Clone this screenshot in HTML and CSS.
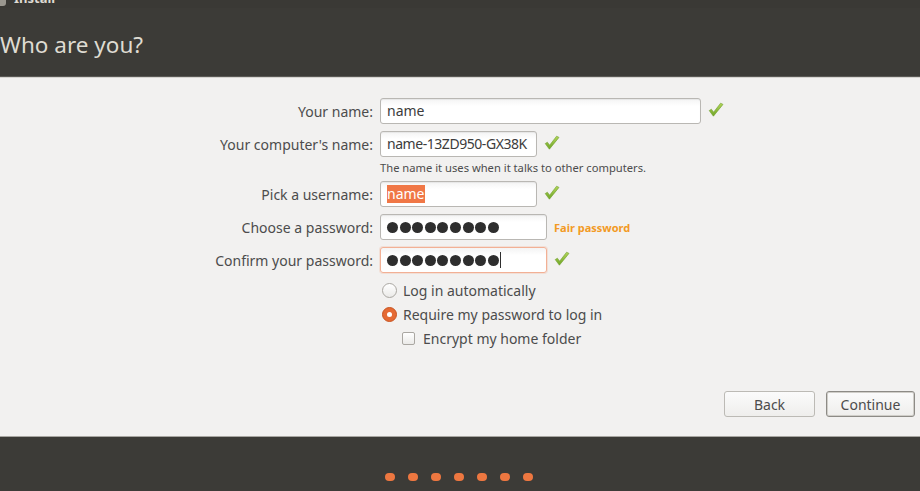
FILE: index.html
```html
<!DOCTYPE html>
<html>
<head>
<meta charset="utf-8">
<link rel="stylesheet" href="styles.css">
</head>
<body>
<svg class="defs" width="0" height="0"><defs><linearGradient id="cg" x1="0" y1="0" x2="0" y2="1"><stop offset="0" stop-color="#b4d65a"/><stop offset="1" stop-color="#6fa526"/></linearGradient></defs></svg>
<div class="window">
  <div class="titlebar"><span class="tb-icon"></span><span class="tb-text">Install</span></div>
  <div class="header"><h1 class="title">Who are you?</h1></div>
  <div class="content">
    <div class="form">
      <div class="row">
        <label class="label">Your name:</label>
        <div class="field"><div class="input wide">name</div>
          <svg class="check" viewBox="0 0 16 16"><path d="M1.2 8.6 L5.4 14.2 L15 2.4 L12.6 1.2 L5.6 10.2 L3.4 7.2 Z" fill="url(#cg)" stroke="#6d9e28" stroke-width="0.6" stroke-linejoin="round"/></svg>
        </div>
      </div>
      <div class="row">
        <label class="label">Your computer's name:</label>
        <div class="field"><div class="input mid tight">name-13ZD950-GX38K</div>
          <svg class="check" viewBox="0 0 16 16"><path d="M1.2 8.6 L5.4 14.2 L15 2.4 L12.6 1.2 L5.6 10.2 L3.4 7.2 Z" fill="url(#cg)" stroke="#6d9e28" stroke-width="0.6" stroke-linejoin="round"/></svg>
        </div>
      </div>
      <div class="hint">The name it uses when it talks to other computers.</div>
      <div class="row">
        <label class="label">Pick a username:</label>
        <div class="field"><div class="input mid"><span class="sel">name</span></div>
          <svg class="check" viewBox="0 0 16 16"><path d="M1.2 8.6 L5.4 14.2 L15 2.4 L12.6 1.2 L5.6 10.2 L3.4 7.2 Z" fill="url(#cg)" stroke="#6d9e28" stroke-width="0.6" stroke-linejoin="round"/></svg>
        </div>
      </div>
      <div class="row">
        <label class="label">Choose a password:</label>
        <div class="field"><div class="input pw"><span class="dots"><i></i><i></i><i></i><i></i><i></i><i></i><i></i><i></i><i></i></span></div>
          <span class="strength">Fair password</span>
        </div>
      </div>
      <div class="row">
        <label class="label">Confirm your password:</label>
        <div class="field"><div class="input pw focus"><span class="dots"><i></i><i></i><i></i><i></i><i></i><i></i><i></i><i></i><i></i></span><span class="caret"></span></div>
          <svg class="check" viewBox="0 0 16 16"><path d="M1.2 8.6 L5.4 14.2 L15 2.4 L12.6 1.2 L5.6 10.2 L3.4 7.2 Z" fill="url(#cg)" stroke="#6d9e28" stroke-width="0.6" stroke-linejoin="round"/></svg>
        </div>
      </div>
      <div class="options">
        <div class="opt"><span class="radio"></span><span>Log in automatically</span></div>
        <div class="opt"><span class="radio on"></span><span>Require my password to log in</span></div>
        <div class="opt sub"><span class="checkbox"></span><span>Encrypt my home folder</span></div>
      </div>
    </div>
    <div class="buttons">
      <button class="btn back">Back</button>
      <button class="btn cont">Continue</button>
    </div>
  </div>
  <div class="footer">
    <div class="dots-bar"><i></i><i></i><i></i><i></i><i></i><i></i><i></i></div>
  </div>
</div>
</body>
</html>
```
FILE: styles.css
```css
* { box-sizing: border-box; }
html, body { margin: 0; padding: 0; }
body {
  width: 920px; height: 491px; overflow: hidden;
  font-family: "Noto Sans", "DejaVu Sans", sans-serif;
  background: #f2f1f0;
}
.defs { position: absolute; width: 0; height: 0; }
.window { display: flex; flex-direction: column; height: 491px; }
.titlebar {
  height: 8px; background: #3a3935; position: relative; overflow: hidden;
  display: flex; align-items: flex-end;
}
.tb-icon {
  width: 6px; height: 6px; border-radius: 0 0 3px 0; background: #9a978f;
  margin-bottom: 2px; flex: none;
}
.tb-text {
  color: #dfdbd2; font-weight: bold; font-size: 13px; line-height: 13px;
  margin-left: 8px; margin-bottom: 3px;
}
.header {
  height: 69px; background: #3c3b37;
  border-bottom: 1px solid #5a5955;
  display: flex; align-items: flex-start;
}
.title {
  margin: 22px 0 0 0; font-weight: normal; font-size: 22.5px; line-height: 30px;
  color: #dfdbd2;
}
.content {
  flex: 1; background: #f2f1f0; display: flex; flex-direction: column;
  border-top: 1px solid #d6d4d0;
}
.form { padding-top: 20px; display: flex; flex-direction: column; }
.row { display: flex; align-items: center; height: 26px; margin-bottom: 7px; }
.label {
  width: 380px; padding-right: 7px; text-align: right;
  font-size: 14px; color: #4c4c4c; white-space: nowrap;
}
.field { display: flex; align-items: center; }
.input {
  height: 26px; border: 1px solid #b9b7b3; border-radius: 3px;
  background: linear-gradient(#f4f4f4, #ffffff 30%);
  box-shadow: inset 0 1px 1px rgba(0,0,0,0.06);
  font-size: 14px; color: #3c3c3c; padding: 0 6px;
  display: flex; align-items: center; line-height: 18px; white-space: nowrap;
  overflow: hidden;
}
.tight { letter-spacing: -0.45px; padding: 0 5px 0 6px; }
.wide { width: 321px; }
.mid { width: 157px; }
.pw { width: 167px; }
.focus { border-color: #f2b095; box-shadow: 0 0 0 1px rgba(240,120,70,0.15); }
.sel { background: #f07746; color: #ffffff; }
.check { width: 16px; height: 16px; margin-left: 7px; margin-top: -2px; }
.hint {
  margin: -3px 0 0 380px; font-size: 11.2px; color: #4c4c4c; height: 17px; line-height: 14px;
}
.form > .hint + .row { margin-top: 3px; }
.strength { color: #f39a24; font-weight: bold; font-size: 11px; margin-left: 7px; }
.dots { display: flex; gap: 1.6px; }
.dots i { width: 11px; height: 11px; border-radius: 50%; background: #2e2e2e; display: block; }
.caret { width: 1px; height: 16px; background: #2e2e2e; margin-left: 1px; }
.options { margin-left: 382px; margin-top: -2px; display: flex; flex-direction: column; }
.opt {
  display: flex; align-items: center; height: 24px; font-size: 14px; color: #4c4c4c;
}
.opt.sub { margin-left: 20px; }
.radio {
  width: 15px; height: 15px; border-radius: 50%; border: 1px solid #aaa7a2;
  background: linear-gradient(#ffffff, #ebeae8); margin-right: 6px; position: relative; flex: none;
}
.radio.on { background: #e56a34; border-color: #c95420; }
.radio.on::after {
  content: ""; position: absolute; left: 4px; top: 4px; width: 5px; height: 5px;
  border-radius: 50%; background: #fff;
}
.checkbox {
  width: 13px; height: 13px; border: 1px solid #aaa7a2; border-radius: 2px;
  background: linear-gradient(#ffffff, #ebeae8); margin-right: 8px; flex: none;
}
.buttons {
  margin-top: auto; margin-bottom: 19px; display: flex; justify-content: flex-end;
  gap: 11px; padding-right: 5px;
}
.btn {
  height: 26px; font-family: inherit; font-size: 14px; color: #4c4c4c;
  border: 1px solid #bcbab5; border-radius: 3px;
  background: linear-gradient(#fbfbfb, #efeeec);
  padding: 0;
}
.back { width: 91px; }
.cont { width: 89px; border-color: #8d8b86; box-shadow: inset 0 0 0 1px #d0cec9; }
.footer {
  height: 55px; background: #3c3b37; border-top: 1px solid #a8a6a1;
  display: flex; justify-content: center;
}
.dots-bar { display: flex; gap: 13px; margin-top: 36px; margin-left: -2px; }
.dots-bar i { display: block; width: 10px; height: 8px; border-radius: 4px; background: #ed7740; }
```
